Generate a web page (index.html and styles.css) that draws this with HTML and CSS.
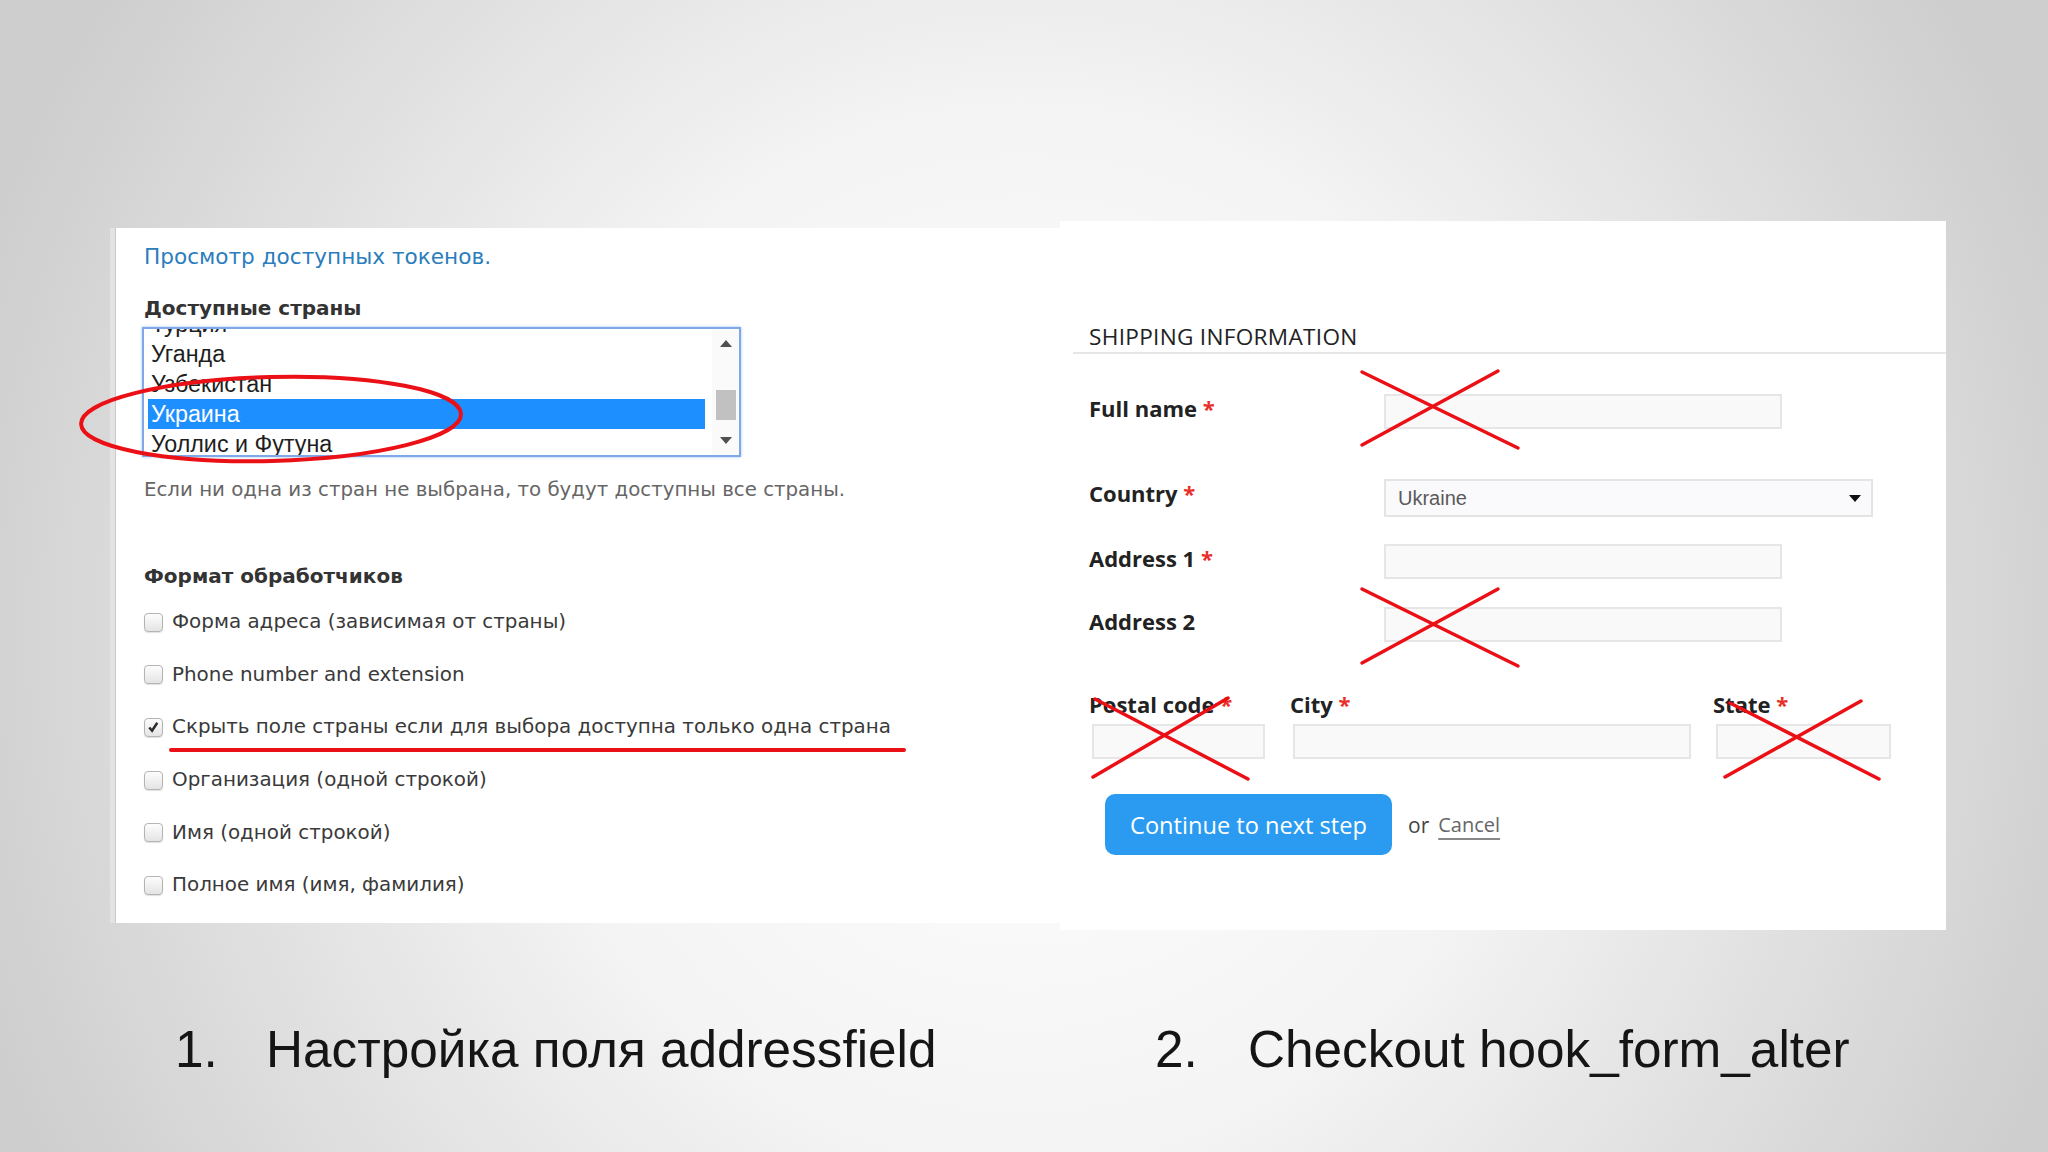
FILE: index.html
```html
<!DOCTYPE html>
<html lang="ru">
  <head>
    <meta charset="UTF-8" />
    <title>addressfield и checkout</title>
    <link rel="stylesheet" href="styles.css">
  </head>
  <body>
    <div class="slide">
      <div class="screens">
        <!-- настройки поля addressfield -->
        <div class="shot shot-settings">
          <a class="token-link" href="#">Просмотр доступных токенов.</a>
          <div class="field-label">Доступные страны</div>
          <div class="listbox">
            <ul class="listbox-items">
              <li>Турция</li>
              <li>Уганда</li>
              <li>Узбекистан</li>
              <li class="selected">Украина</li>
              <li>Уоллис и Футуна</li>
            </ul>
            <div class="listbox-scroll">
              <span class="arrow arrow-up"></span>
              <span class="thumb"></span>
              <span class="arrow arrow-down"></span>
            </div>
          </div>
          <div class="description">Если ни одна из стран не выбрана, то будут доступны все страны.</div>
          <div class="field-label handlers-label">Формат обработчиков</div>
          <div class="checks">
            <label class="check"><span class="box"></span>Форма адреса (зависимая от страны)</label>
            <label class="check"><span class="box"></span>Phone number and extension</label>
            <label class="check"><span class="box checked"><svg viewBox="0 0 18 18" width="18" height="18"><path d="M4.5 9.5 L7.5 13 L13 4.5" fill="none" stroke="#2b2b2b" stroke-width="2.6"/></svg></span>Скрыть поле страны если для выбора доступна только одна страна</label>
            <label class="check"><span class="box"></span>Организация (одной строкой)</label>
            <label class="check"><span class="box"></span>Имя (одной строкой)</label>
            <label class="check"><span class="box"></span>Полное имя (имя, фамилия)</label>
          </div>
        </div>

        <!-- форма checkout -->
        <div class="shot shot-checkout">
          <h2 class="pane-title">SHIPPING INFORMATION</h2>
          <div class="form-row row-name">
            <label>Full name <span class="req">*</span></label>
            <span class="input input-wide"></span>
          </div>
          <div class="form-row row-country">
            <label>Country <span class="req">*</span></label>
            <span class="select">Ukraine<svg class="caret" viewBox="0 0 12 7" width="12" height="7"><path d="M0 0 H12 L6 7 Z" fill="#111"/></svg></span>
          </div>
          <div class="form-row row-addr1">
            <label>Address 1 <span class="req">*</span></label>
            <span class="input input-wide"></span>
          </div>
          <div class="form-row row-addr2">
            <label>Address 2</label>
            <span class="input input-wide"></span>
          </div>
          <div class="addr-row">
            <div class="addr-col col-postal">
              <label>Postal code <span class="req">*</span></label>
              <span class="input"></span>
            </div>
            <div class="addr-col col-city">
              <label>City <span class="req">*</span></label>
              <span class="input"></span>
            </div>
            <div class="addr-col col-state">
              <label>State <span class="req">*</span></label>
              <span class="input"></span>
            </div>
          </div>
          <div class="actions">
            <button class="next-btn">Continue to next step</button>
            <span class="or">or</span>
            <a class="cancel" href="#">Cancel</a>
          </div>
        </div>
      </div>

      <div class="captions">
        <div class="caption caption-first"><span class="num">1.</span>Настройка поля addressfield</div>
        <div class="caption"><span class="num">2.</span>Checkout hook_form_alter</div>
      </div>

      <!-- пометки поверх скриншотов -->
      <svg class="marks" viewBox="0 0 2048 1152" width="2048" height="1152">
        <g fill="none" stroke="#ea1016" stroke-linecap="round">
          <ellipse cx="271" cy="419" rx="190" ry="42" stroke-width="4" transform="rotate(-1.5 271 419)"/>
          <line x1="171" y1="750" x2="904" y2="750" stroke-width="4"/>
          <g stroke-width="3.5">
            <line x1="1362" y1="372" x2="1518" y2="448"/>
            <line x1="1362" y1="445" x2="1498" y2="371"/>
            <line x1="1362" y1="589" x2="1518" y2="666"/>
            <line x1="1362" y1="663" x2="1498" y2="589"/>
            <line x1="1095" y1="699" x2="1248" y2="779"/>
            <line x1="1093" y1="777" x2="1228" y2="698"/>
            <line x1="1730" y1="703" x2="1879" y2="779"/>
            <line x1="1725" y1="777" x2="1861" y2="701"/>
          </g>
        </g>
      </svg>
    </div>
  </body>
</html>
```

FILE: styles.css
```css
body {
  margin: 0;
  background: #d4d4d4;
}

.slide {
  position: relative;
  width: 2048px;
  height: 1152px;
  overflow: hidden;
  background: radial-gradient(ellipse 1100px 1150px at 50% 55%, #ffffff 0%, #f4f4f4 45%, #cecece 100%);
}

.screens {
  display: flex;
  align-items: flex-start;
  padding: 221px 0 0 110px;
}

.shot {
  background: #fff;
  box-sizing: border-box;
}

/* левый скриншот */
.shot-settings {
  width: 950px;
  height: 695px;
  margin-top: 7px;
  padding: 15px 0 0 34px;
  box-shadow: inset 5px 0 0 #e3e3e3, inset 6px 0 0 #c9c9c9;
  font-family: "DejaVu Sans", Verdana, sans-serif;
  font-size: 20px;
  line-height: 28px;
  color: #333;
}

.token-link {
  display: block;
  font-size: 21.6px;
  color: #2b7dbc;
  text-decoration: none;
}

.field-label {
  margin-top: 23px;
  font-weight: bold;
  color: #333;
}

.listbox {
  display: flex;
  width: 599px;
  height: 130px;
  margin: 5px 0 0 -2px;
  border: 2px solid #7ea9e6;
  box-shadow: 0 0 3px #a9c8f3;
  box-sizing: border-box;
  background: #fff;
  overflow: hidden;
}

.listbox-items {
  flex: 1;
  margin: -20px 0 0 0;
  padding: 0 7px 0 4px;
  list-style: none;
  font-family: "Liberation Sans", Arial, sans-serif;
  font-size: 23.3px;
  line-height: 30px;
  color: #1e1e1e;
}

.listbox-items li {
  padding-left: 3px;
}

.listbox-items li.selected {
  background: #1e8fff;
  color: #fff;
}

.listbox-scroll {
  display: flex;
  flex-direction: column;
  align-items: center;
  width: 27px;
  background: #fafafa;
}

.arrow {
  width: 0;
  height: 0;
  border-left: 6px solid transparent;
  border-right: 6px solid transparent;
}

.arrow-up {
  margin-top: 11px;
  border-bottom: 7px solid #505050;
}

.arrow-down {
  margin-top: 17px;
  border-top: 7px solid #505050;
}

.thumb {
  width: 20px;
  height: 30px;
  margin-top: 43px;
  background: #c1c1c1;
}

.description {
  margin-top: 19px;
  font-size: 19.8px;
  color: #666;
}

.handlers-label {
  margin-top: 58px;
}

.checks {
  margin-top: 6px;
}

.check {
  display: flex;
  align-items: center;
  height: 52.6px;
  font-size: 19.9px;
  color: #3a3a3a;
}

.box {
  display: flex;
  align-items: center;
  justify-content: center;
  width: 19px;
  height: 19px;
  margin-right: 9px;
  border: 1px solid #b4b4b4;
  border-radius: 4px;
  box-sizing: border-box;
  background: linear-gradient(#fdfdfd, #e4e4e4);
  box-shadow: 0 1px 1px rgba(0, 0, 0, 0.12);
}

/* правый скриншот */
.shot-checkout {
  width: 886px;
  height: 709px;
  padding-top: 101px;
  font-family: "Open Sans", sans-serif;
  color: #222;
}

.pane-title {
  margin: 0 0 0 13px;
  padding: 0 0 1px 16px;
  font-size: 22.6px;
  font-weight: 400;
  line-height: 29px;
  letter-spacing: 0.3px;
  border-bottom: 2px solid #e6e6e6;
}

.form-row {
  display: flex;
  align-items: flex-start;
  padding-left: 29px;
}

.form-row label,
.addr-col label {
  display: block;
  font-size: 22px;
  font-weight: 700;
  line-height: 30px;
}

.form-row label {
  width: 295px;
}

.req {
  color: #e8302a;
}

.row-name {
  margin-top: 39px;
}

.row-country {
  margin-top: 49px;
}

.row-addr1 {
  margin-top: 26px;
}

.row-addr2 {
  margin-top: 27px;
}

.input {
  display: block;
  height: 35px;
  border: 2px solid #e6e6e6;
  box-sizing: border-box;
  background: #f9f9f9;
}

.input-wide {
  width: 398px;
  margin-top: 1px;
}

.select {
  display: flex;
  align-items: center;
  justify-content: space-between;
  width: 489px;
  height: 38px;
  margin-top: 1px;
  padding: 0 10px 0 12px;
  border: 2px solid #e4e4e4;
  box-sizing: border-box;
  background: #faf9fc;
  font-family: "Liberation Sans", Arial, sans-serif;
  font-size: 20px;
  color: #5a5a5a;
}

.addr-row {
  display: flex;
  margin-top: 47px;
  padding-left: 29px;
}

.addr-col .input {
  margin: 5px 0 0 3px;
}

.col-postal {
  width: 201px;
}

.col-postal .input {
  width: 173px;
}

.col-city {
  width: 423px;
}

.col-city .input {
  width: 398px;
}

.col-state .input {
  width: 175px;
}

.actions {
  display: flex;
  align-items: center;
  margin-top: 35px;
  padding-left: 45px;
}

.next-btn {
  width: 287px;
  height: 61px;
  border: none;
  border-radius: 10px;
  background: #2a9bf0;
  color: #fff;
  font-family: "Open Sans", sans-serif;
  font-size: 23.6px;
  cursor: pointer;
}

.or {
  margin-left: 16px;
  font-size: 21px;
  color: #444;
}

.cancel {
  margin-left: 9px;
  font-size: 20px;
  color: #666;
  text-decoration: underline;
  text-underline-offset: 6px;
  text-decoration-color: #888;
}

/* подписи под скриншотами */
.captions {
  display: flex;
  margin-top: 90px;
  padding-left: 175px;
  font-family: "Liberation Sans", Arial, sans-serif;
  font-size: 51.3px;
  line-height: 60px;
  color: #151515;
}

.caption-first {
  width: 980px;
}

.num {
  display: inline-block;
  width: 93px;
}

.caption-first .num {
  width: 91px;
}

.marks {
  position: absolute;
  top: 0;
  left: 0;
  pointer-events: none;
}
```
